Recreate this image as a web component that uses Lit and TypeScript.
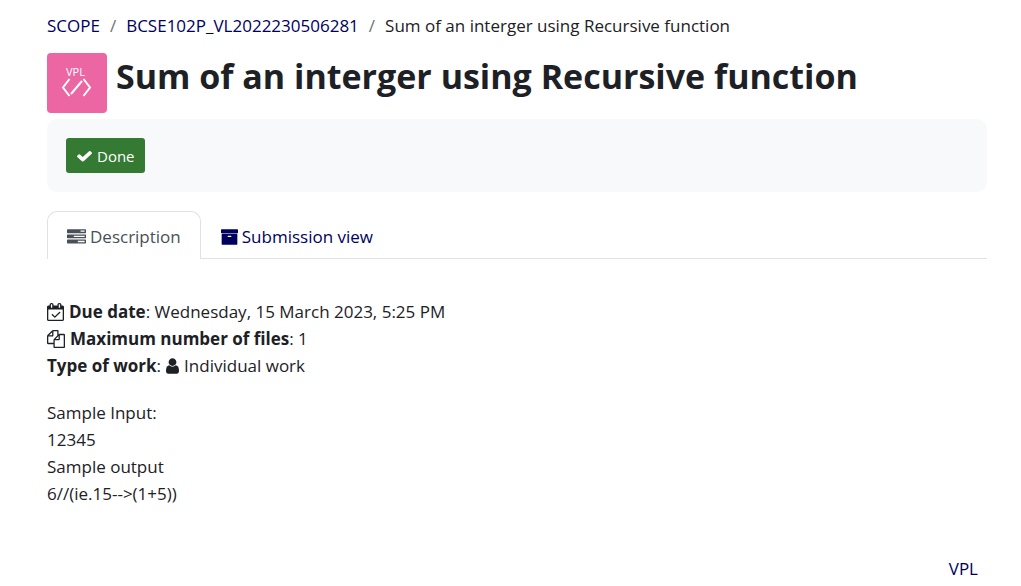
import { LitElement, html, css, svg } from "lit";
import { customElement } from "lit/decorators.js";

const ICONS = {
  check: { box: "121 0 1550 1792", w: 15, h: 16, d: "M1671 566q0 40-28 68l-724 724-136 136q-28 28-68 28t-68-28l-136-136-362-362q-28-28-28-68t28-68l136-136q28-28 68-28t68 28l294 295 656-657q28-28 68-28t68 28l136 136q28 28 28 68z" },
  tasks: { box: "0 0 1792 1792", w: 19, h: 18, d: "M1024 1408h640v-128h-640v128zm-384-512h1024v-128h-1024v128zm640-512h384v-128h-384v128zm512 832v256q0 26-19 45t-45 19h-1664q-26 0-45-19t-19-45v-256q0-26 19-45t45-19h1664q26 0 45 19t19 45zm0-512v256q0 26-19 45t-45 19h-1664q-26 0-45-19t-19-45v-256q0-26 19-45t45-19h1664q26 0 45 19t19 45zm0-512v256q0 26-19 45t-45 19h-1664q-26 0-45-19t-19-45v-256q0-26 19-45t45-19h1664q26 0 45 19t19 45z" },
  archive: { box: "64 0 1664 1792", w: 17, h: 18, d: "M1088 832q0-26-19-45t-45-19h-256q-26 0-45 19t-19 45 19 45 45 19h256q26 0 45-19t19-45zm576-192v960q0 26-19 45t-45 19h-1408q-26 0-45-19t-19-45v-960q0-26 19-45t45-19h1408q26 0 45 19t19 45zm64-448v256q0 26-19 45t-45 19h-1536q-26 0-45-19t-19-45v-256q0-26 19-45t45-19h1536q26 0 45 19t19 45z" },
  calendar: { box: "0 0 1664 1792", w: 17, h: 18, d: "M1303 964l-512 512q-10 9-23 9t-23-9l-288-288q-9-10-9-23t9-22l46-46q9-9 22-9t23 9l220 220 444-444q10-9 23-9t22 9l46 46q9 9 9 22t-9 23zm-1175 700h1408v-1024h-1408v1024zm384-1216v-288q0-14-9-23t-23-9h-64q-14 0-23 9t-9 23v288q0 14 9 23t23 9h64q14 0 23-9t9-23zm768 0v-288q0-14-9-23t-23-9h-64q-14 0-23 9t-9 23v288q0 14 9 23t23 9h64q14 0 23-9t9-23zm384-64v1280q0 52-38 90t-90 38h-1408q-52 0-90-38t-38-90v-1280q0-52 38-90t90-38h128v-96q0-66 47-113t113-47h64q66 0 113 47t47 113v96h384v-96q0-66 47-113t113-47h64q66 0 113 47t47 113v96h128q52 0 90 38t38 90z" },
  files: { box: "0 0 1792 1792", w: 18, h: 18, d: "M1696 384q40 0 68 28t28 68v1216q0 40-28 68t-68 28h-960q-40 0-68-28t-28-68v-288h-544q-40 0-68-28t-28-68v-672q0-40 20-88t48-76l408-408q28-28 76-48t88-20h416q40 0 68 28t28 68v328q68-40 128-40h416zm-544 213l-299 299h299v-299zm-640-384l-299 299h299v-299zm196 647l316-316v-416h-384v416q0 40-28 68t-68 28h-416v640h512v-256q0-40 20-88t48-76zm956 804v-1152h-384v416q0 40-28 68t-68 28h-416v640h896z" },
  user: { box: "256 0 1280 1792", w: 13, h: 18, d: "M1536 1399q0 109-62.5 187t-150.5 78h-854q-88 0-150.5-78t-62.5-187q0-85 8.5-160.5t31.5-152 58.5-131 94-89 134.5-34.5q131 128 313 128t313-128q76 0 134.5 34.5t94 89 58.5 131 31.5 152 8.5 160.5zm-256-887q0 159-112.5 271.5t-271.5 112.5-271.5-112.5-112.5-271.5 112.5-271.5 271.5-112.5 271.5 112.5 112.5 271.5z" },
};

const icon = (name: keyof typeof ICONS) => {
  const i = ICONS[name];
  return html`<svg class="icon" aria-hidden="true" viewBox=${i.box} width=${i.w} height=${i.h} preserveAspectRatio="none">${svg`<path d=${i.d} />`}</svg>`;
};

@customElement("app-root")
export class AppRoot extends LitElement {
  static styles = css`
    :host {
      display: block;
      box-sizing: border-box;
      padding: 12px 34px 0 47px;
      background: #fff;
      color: #1d2125;
      font: 17px/27px "Segoe UI", "Open Sans", "Noto Sans", sans-serif;
    }
    a { color: #00005e; text-decoration: none; }
    a:hover { text-decoration: underline; }
    .icon { fill: currentColor; flex: none; }
    .crumbs { display: flex; flex-wrap: wrap; margin: 0; padding: 0; list-style: none; }
    .crumbs li + li::before { content: "/"; padding: 0 10px; color: #6a737b; }
    .heading { display: flex; gap: 9px; margin-top: 14px; }
    .logo { flex: none; width: 60px; height: 60px; border-radius: 4px; background: #eb66a2; }
    .logo text { fill: #fff; font-size: 11px; }
    .logo path { fill: none; stroke: #fff; stroke-width: 2; }
    h1 { margin: 0; font-size: 34px; line-height: 46px; font-weight: 700; }
    .completion { margin-top: 6px; padding: 19px; border-radius: 10px; background: #f8f9fb; display: flex; }
    button {
      display: flex; align-items: center; gap: 5px; height: 35px; padding: 0 10px 0 11px;
      border: 0; border-radius: 3px; background: #357a32; color: #fff;
      font-family: inherit; font-size: 15px;
    }
    .tabs { display: flex; margin-top: 19px; border-bottom: 1px solid #dee2e6; }
    .tab {
      display: flex; align-items: center; gap: 4px; padding: 11px 19px 8px;
      border: 1px solid transparent; border-bottom: 0; border-radius: 10px 10px 0 0;
    }
    .tab.active { margin-bottom: -1px; padding-bottom: 9px; border-color: #dee2e6; background: #fff; color: #495057; }
    .details { margin-top: 39px; }
    .row { display: flex; align-items: center; gap: 5px; }
    .sample { margin: 20px 0 0; }
    .next { display: flex; justify-content: flex-end; margin-top: 48px; padding-right: 9px; }
  `;

  render() {
    return html`
      <nav aria-label="Breadcrumb">
        <ol class="crumbs">
          <li><a href="#">SCOPE</a></li>
          <li><a href="#">BCSE102P_VL2022230506281</a></li>
          <li>Sum of an interger using Recursive function</li>
        </ol>
      </nav>
      <header class="heading">
        <svg class="logo" viewBox="0 0 60 60" aria-hidden="true">
          <text x="19" y="23">VPL</text>
          <path d="M22.500 26L16 34.500L22.500 43M36.500 26L43 34.500L36.500 43M35 28L24 41" />
        </svg>
        <h1>Sum of an interger using Recursive function</h1>
      </header>
      <section class="completion">
        <button type="button">${icon("check")}<span>Done</span></button>
      </section>
      <nav class="tabs" aria-label="Activity">
        <a class="tab active" href="#" aria-current="page">${icon("tasks")}<span>Description</span></a>
        <a class="tab" href="#">${icon("archive")}<span>Submission view</span></a>
      </nav>
      <main>
        <section class="details">
          <div class="row">${icon("calendar")}<span><b>Due date</b>: Wednesday, 15 March 2023, 5:25 PM</span></div>
          <div class="row">${icon("files")}<span><b>Maximum number of files</b>: 1</span></div>
          <div class="row"><span><b>Type of work</b>:</span>${icon("user")}<span>Individual work</span></div>
        </section>
        <p class="sample">Sample Input:<br />12345<br />Sample output<br />6//(ie.15--&gt;(1+5))</p>
      </main>
      <footer class="next"><a href="#">VPL</a></footer>
    `;
  }
}
